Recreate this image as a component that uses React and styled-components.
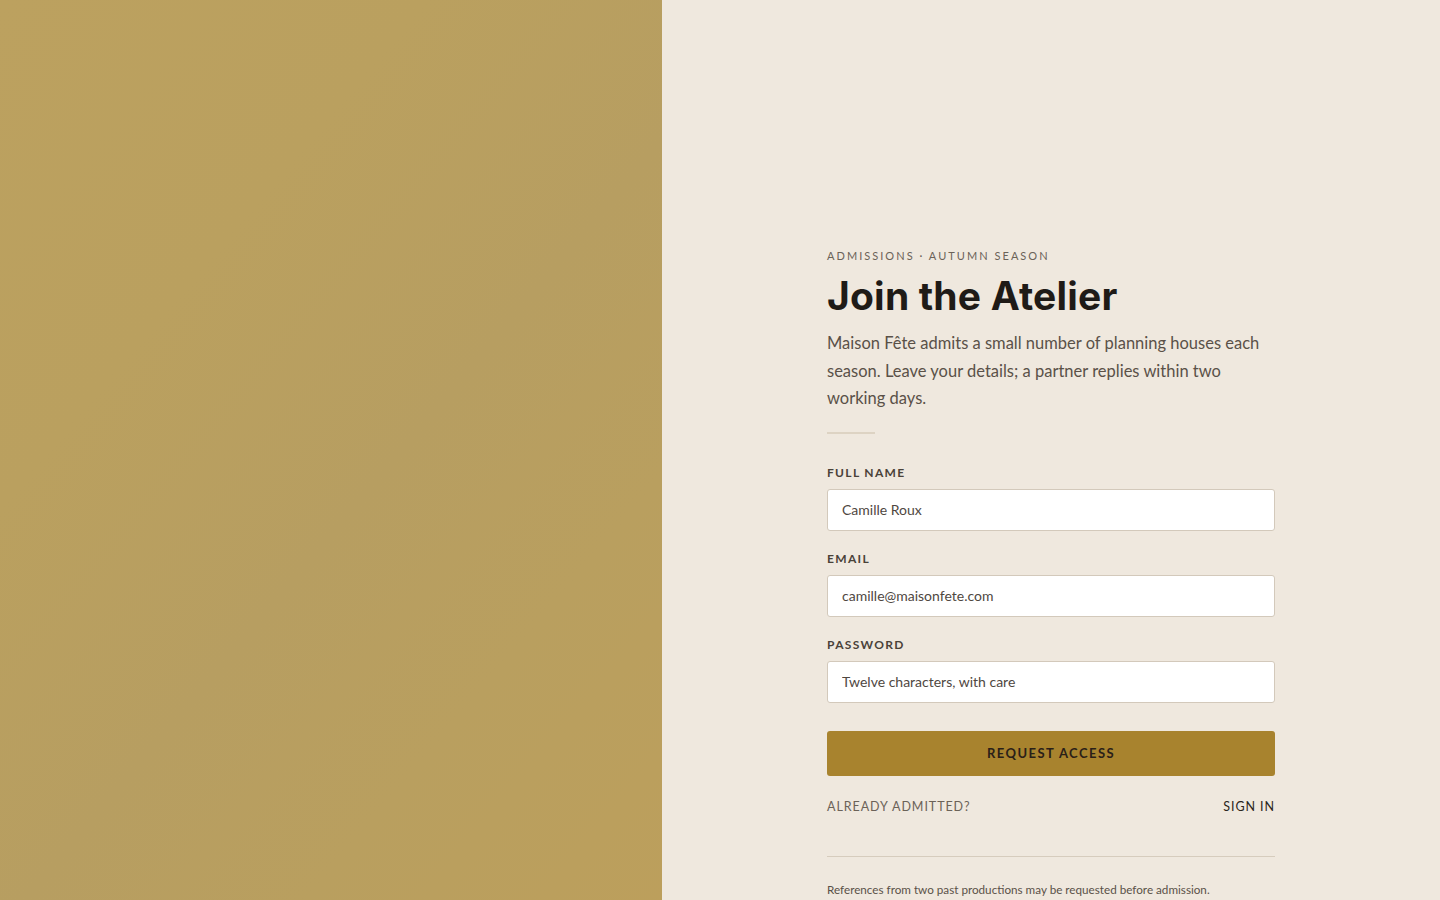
import React from "react";
import styled, { createGlobalStyle } from "styled-components";

const Global = createGlobalStyle`
  * { box-sizing: border-box; }
  html, body { margin: 0; padding: 0; }
  body {
    font-family: Lato, "Noto Sans", sans-serif;
    background: #efe8de;
    color: #2a2520;
    -webkit-font-smoothing: antialiased;
  }
`;

const Page = styled.div`
  display: grid;
  grid-template-columns: 662px 1fr;
  min-height: 100vh;
`;

const Visual = styled.aside`
  background: linear-gradient(
    130deg,
    #bca15f 0%,
    #baa05f 30%,
    #b79e61 55%,
    #b99f5f 75%,
    #bc9f5c 100%
  );
  min-height: 900px;
`;

const Side = styled.main`
  background: #efe8de;
  display: flex;
  justify-content: center;
  padding-top: 249px;
`;

const Panel = styled.section`
  width: 448px;
  display: flex;
  flex-direction: column;
`;

const Eyebrow = styled.div`
  font-size: 11px;
  letter-spacing: 0.185em;
  text-transform: uppercase;
  color: #6b6258;
  line-height: 14px;
`;

const Title = styled.h1`
  margin: 10px 0 0;
  font-family: Inter, "Noto Sans", sans-serif;
  font-weight: 700;
  font-size: 39px;
  line-height: 46px;
  letter-spacing: 0.2px;
  color: #1f1b17;
`;

const Lead = styled.p`
  margin: 11px 0 0;
  font-size: 16.5px;
  line-height: 27.5px;
  color: #5a5148;
`;

const Rule = styled.div`
  width: 48px;
  height: 2px;
  background: #ddd3c3;
  margin: 19px 0 31px;
`;

const Field = styled.label`
  display: flex;
  flex-direction: column;
  gap: 8px;
  margin-bottom: 20px;
`;

const FieldLabel = styled.span`
  font-size: 12px;
  font-weight: 700;
  letter-spacing: 0.11em;
  text-transform: uppercase;
  color: #4a4239;
  line-height: 16px;
`;

const Input = styled.input`
  height: 42px;
  width: 100%;
  background: #ffffff;
  border: 1px solid #d3c9bb;
  border-radius: 3px;
  padding: 0 14px;
  font-family: inherit;
  font-size: 14px;
  color: #4f473f;
  outline: none;
  &::placeholder { color: #4f473f; opacity: 1; }
`;

const Submit = styled.button`
  margin-top: 8px;
  height: 45px;
  width: 100%;
  border: none;
  border-radius: 3px;
  background: #a8832e;
  color: #2a2018;
  font-family: inherit;
  font-size: 13px;
  font-weight: 700;
  letter-spacing: 0.11em;
  text-transform: uppercase;
  cursor: pointer;
`;

const Switch = styled.div`
  display: flex;
  justify-content: space-between;
  align-items: center;
  margin-top: 23px;
  font-size: 12.5px;
  letter-spacing: 0.075em;
  text-transform: uppercase;
  line-height: 16px;
`;

const Muted = styled.span`
  color: #6b6258;
`;

const SignIn = styled.a`
  color: #2a2520;
  text-decoration: none;
  cursor: pointer;
`;

const Divider = styled.hr`
  border: none;
  border-top: 1px solid #d6ccbd;
  margin: 41px 0 0;
`;

const Footnote = styled.p`
  margin: 24px 0 0;
  font-size: 11.7px;
  line-height: 16px;
  color: #5a5148;
`;

const fields = [
  { label: "Full name", type: "text", value: "Camille Roux" },
  { label: "Email", type: "email", value: "camille@maisonfete.com" },
  { label: "Password", type: "text", placeholder: "Twelve characters, with care" },
];

export default function App() {
  return (
    <>
      <Global />
      <Page>
        <Visual />
        <Side>
          <Panel>
            <Eyebrow>Admissions · Autumn Season</Eyebrow>
            <Title>Join the Atelier</Title>
            <Lead>
              Maison Fête admits a small number of planning houses each season.
              Leave your details; a partner replies within two working days.
            </Lead>
            <Rule />
            {fields.map((f) => (
              <Field key={f.label}>
                <FieldLabel>{f.label}</FieldLabel>
                <Input
                  type={f.type}
                  defaultValue={f.value}
                  placeholder={f.placeholder}
                />
              </Field>
            ))}
            <Submit type="button">Request access</Submit>
            <Switch>
              <Muted>Already admitted?</Muted>
              <SignIn>Sign in</SignIn>
            </Switch>
            <Divider />
            <Footnote>
              References from two past productions may be requested before admission.
            </Footnote>
          </Panel>
        </Side>
      </Page>
    </>
  );
}
